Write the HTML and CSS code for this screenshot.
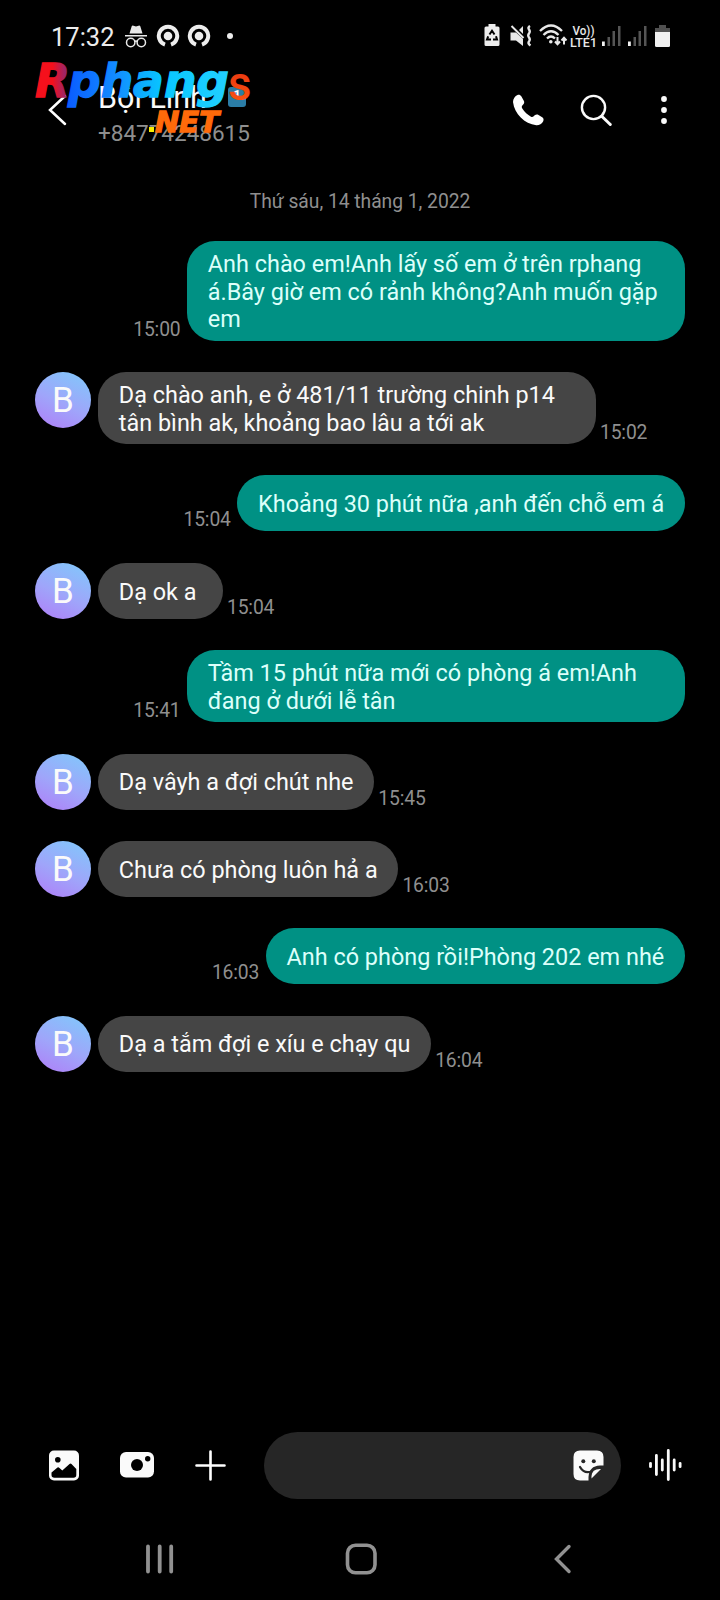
FILE: index.html
```html
<!DOCTYPE html>
<html lang="vi">
<head>
<meta charset="utf-8">
<title>Tin nhắn</title>
<link rel="stylesheet" href="styles.css">
</head>
<body>
<div class="screen">
  <div class="status">
    <span class="clock">17:32</span>
    <svg class="st-incog" width="24" height="24" viewBox="0 0 24 24" fill="#e8e8e8"><path d="M5.5 9.5 7.7 2.2Q8.300 1.200 9.500 1.700L12 2.500 14.500 1.700Q15.700 1.200 16.300 2.200L18.500 9.500ZM1 11H23V12.500H1Z"/><g fill="none" stroke="#e8e8e8" stroke-width="1.500"><circle cx="6.700" cy="18.500" r="4.200"/><circle cx="17.300" cy="18.500" r="4.200"/><path d="M10.700 17.500Q12 16.500 13.300 17.500"/></g></svg>
    <svg class="st-ring" width="24" height="24" viewBox="0 0 24 24"><path d="M9 20.600A9.200 9.200 0 1 1 15 20.600" fill="none" stroke="#ededed" stroke-width="4"/><circle cx="12" cy="12" r="4.300" fill="#ededed"/></svg>
    <svg class="st-ring2" width="24" height="24" viewBox="0 0 24 24"><path d="M9 20.600A9.200 9.200 0 1 1 15 20.600" fill="none" stroke="#ededed" stroke-width="4"/><circle cx="12" cy="12" r="4.300" fill="#ededed"/></svg>
    <span class="st-dot"></span>
    <div class="st-right">
      <svg width="16" height="23" viewBox="0 0 16 23"><path d="M4.500 0H11.500V2.500H14Q15.500 2.500 15.500 4V20.500Q15.500 22 14 22H2Q.5 22 .5 20.500V4Q.5 2.500 2 2.500H4.500Z" fill="#ececec"/><path d="M5.500 10.500 8 6.800 10.500 10.500M12 12.300 13 15.500H9M7 15.500H3L4.200 12.300" fill="none" stroke="#000" stroke-width="2"/></svg>
      <svg class="mute" width="23" height="22" viewBox="0 0 23 22"><path d="M.5 7.500H6L13 14V21L6 15.500H.5ZM9 5 13 1V9Z" fill="#e8e8e8"/><path d="M1.500 1 13.500 13" stroke="#e8e8e8" stroke-width="2"/><path d="M20 1Q17.500 2.500 19 4.500T19 8.500T19 12.500T19 16.500T20.500 20.500" fill="none" stroke="#e8e8e8" stroke-width="2.400"/></svg>
      <svg class="wifi" width="29" height="23" viewBox="0 0 29 23" fill="none" stroke="#e8e8e8" stroke-width="2.300"><path d="M1 7Q12 -4 23 7M4.500 11Q12 3.500 19.500 11M8 14.500Q12 10.500 16 14.500"/><circle cx="11.800" cy="17.700" r="1.800" fill="#e8e8e8" stroke="none"/><path d="M18.500 13V20M16 17.500 18.500 20.300 21 17.500M25 20.500V14M22.500 16.500 25 13.700 27.500 16.500" stroke-width="2"/></svg>
      <svg class="lte" width="28" height="24" viewBox="0 0 28 24"><text x="2.500" y="10.500" textLength="22" lengthAdjust="spacingAndGlyphs">Vo))</text><text x="0" y="22.500" textLength="27" lengthAdjust="spacingAndGlyphs">LTE1</text></svg>
      <svg class="sig1" width="19" height="21" viewBox="0 0 19 21" fill="#555"><path d="M5.500 12h2.500v9h-2.500zM10.500 6h2.500v15h-2.500zM16 1h2.500v20h-2.500z"/><path d="M0 16.500h2.800V21H0z" fill="#f2f2f2"/></svg>
      <svg class="sig2" width="19" height="21" viewBox="0 0 19 21" fill="#555"><path d="M5.500 12h2.500v9h-2.500zM10.500 6h2.500v15h-2.500zM16 1h2.500v20h-2.500z"/><path d="M0 16.500h2.800V21H0z" fill="#f2f2f2"/></svg>
      <svg class="batt" width="15" height="22" viewBox="0 0 15 22"><path d="M4 0H11V3H15V8H0V3H4Z" fill="#505050"/><path d="M0 7H15V20.500Q15 22 13.500 22H1.500Q0 22 0 20.500Z" fill="#f0f0f0"/></svg>
    </div>
  </div>

  <header class="header">
    <svg class="back" width="20" height="34" viewBox="0 0 20 34"><path d="M17 3 2 17 17 31" fill="none" stroke="#fff" stroke-width="2.500" stroke-linecap="round"/></svg>
    <div class="contact">
      <div class="name">Bội Linh</div>
      <div class="number">+84774248615</div>
      <span class="sim">1</span>
    </div>
    <svg class="call" width="33" height="33" viewBox="0 0 33 33"><path d="M1 8C1 5 3 2 5.500 1C7 .3 8.500 1 9.300 2.300L11.800 6.700C12.600 8 12.200 9.300 11.200 10.500L10.300 11.500C9.500 12.500 9.700 13.500 10.300 14.500C12.500 18 15.500 20.800 19 22.700C20 23.200 20.900 23 21.700 22.200L22.700 21.300C23.900 20.300 25.200 20.200 26.500 20.900L30.200 23.300C31.600 24.200 31.900 25.700 31.200 27.200C29.900 30 27 31.500 24.300 31.300C12.500 29.700 2.500 20 1 8Z" fill="#fff"/></svg>
    <svg class="search" width="33" height="33" viewBox="0 0 33 33" fill="none" stroke="#fafafa"><circle cx="13.500" cy="13.500" r="11.600" stroke-width="2.400"/><path d="M22 22.500 30.300 30.500" stroke-width="3" stroke-linecap="round"/></svg>
    <svg class="more" width="8" height="30" viewBox="0 0 8 30" fill="#fafafa"><circle cx="4" cy="4" r="2.900"/><circle cx="4" cy="15" r="2.900"/><circle cx="4" cy="26" r="2.900"/></svg>

    <svg class="watermark" width="226" height="84" viewBox="0 0 226 84">
      <defs>
        <linearGradient id="wr" x1="0" x2="1" y1="0" y2="0"><stop offset=".5" stop-color="#f5101c"/><stop offset="1" stop-color="#7b2d86"/></linearGradient>
        <linearGradient id="wb" x1="0" x2="1" y1="0" y2="0"><stop offset="0" stop-color="#0a5cff"/><stop offset=".3" stop-color="#128cff"/><stop offset=".6" stop-color="#08c8ff"/><stop offset="1" stop-color="#22d0ff"/></linearGradient>
        <linearGradient id="ws" x1="0" x2="0" y1="0" y2="1"><stop offset="0" stop-color="#e22c10"/><stop offset="1" stop-color="#ff5a12"/></linearGradient>
      </defs>
      <text class="wm-main" x="4" y="42.500" font-size="46" textLength="35" lengthAdjust="spacingAndGlyphs" fill="url(#wr)" stroke="url(#wr)">R</text>
      <text class="wm-main" x="37" y="42.500" font-size="46" textLength="161" lengthAdjust="spacingAndGlyphs" fill="url(#wb)" stroke="url(#wb)">phang</text>
      <text class="wm-s" x="197" y="46" font-size="49" textLength="23.500" lengthAdjust="spacingAndGlyphs" fill="url(#ws)">s</text>
      <path d="M118 73h5v5h-5z" fill="#f8f000"/>
      <text class="wm-main" x="124" y="77.500" font-size="29" textLength="64" lengthAdjust="spacingAndGlyphs" fill="#ff6a0a" stroke="#ff6a0a">NET</text>
    </svg>
  </header>

  <div class="date">Thứ sáu, 14 tháng 1, 2022</div>

  <main class="thread">
    <div class="row out"><div class="bubble wide">Anh chào em!Anh lấy số em ở trên rphang<br>á.Bây giờ em có rảnh không?Anh muốn gặp<br>em</div><time>15:00</time></div>
    <div class="row in"><div class="avatar">B</div><div class="bubble wide">Dạ chào anh, e ở 481/11 trường chinh p14<br>tân bình ak, khoảng bao lâu a tới ak</div><time>15:02</time></div>
    <div class="row out"><div class="bubble">Khoảng 30 phút nữa ,anh đến chỗ em á</div><time>15:04</time></div>
    <div class="row in"><div class="avatar">B</div><div class="bubble">Dạ ok a</div><time>15:04</time></div>
    <div class="row out"><div class="bubble wide">Tầm 15 phút nữa mới có phòng á em!Anh<br>đang ở dưới lễ tân</div><time>15:41</time></div>
    <div class="row in"><div class="avatar">B</div><div class="bubble">Dạ vâyh a đợi chút nhe</div><time>15:45</time></div>
    <div class="row in"><div class="avatar">B</div><div class="bubble">Chưa có phòng luôn hả a</div><time>16:03</time></div>
    <div class="row out"><div class="bubble">Anh có phòng rồi!Phòng 202 em nhé</div><time>16:03</time></div>
    <div class="row in"><div class="avatar">B</div><div class="bubble">Dạ a tắm đợi e xíu e chạy qu</div><time>16:04</time></div>
  </main>

  <footer class="composer">
    <svg class="gallery" width="30" height="31" viewBox="0 0 30 31"><rect y=".5" width="30" height="30" rx="5" fill="#fafafa"/><circle cx="8.800" cy="9.800" r="2.800"/><path d="M2.500 22.500 8.500 17.500Q9.500 17 10.500 18L13.300 20.500 20.500 14Q21.500 13.200 22.500 14L27.300 19V25Q27.300 27.700 24.500 27.700H5.500Q2.500 27.700 2.500 25Z"/></svg>
    <svg class="camera" width="34" height="26" viewBox="0 0 34 26"><rect width="34" height="25.500" rx="6" fill="#fafafa"/><circle cx="17" cy="13" r="6"/><circle cx="27.700" cy="6.700" r="2.700"/></svg>
    <svg class="plus" width="31" height="31" viewBox="0 0 31 31"><path d="M1.500 15.500H29.500M15.500 1.500V29.500" stroke="#fff" stroke-width="2.600" stroke-linecap="round"/></svg>
    <div class="field">
      <svg width="31" height="31" viewBox="0 0 31 31"><path d="M7 .5H24Q30.500 .5 30.500 7V15.500H27Q16 16 15.500 27V30.500H7Q.5 30.500 .5 24V7Q.5 .5 7 .5Z" fill="#fafafa"/><path d="M18.500 28.500V26Q19 18.500 28 19Z" fill="#fafafa"/><circle cx="10.300" cy="11.300" r="2" fill="#262626"/><circle cx="20.800" cy="11.300" r="2" fill="#262626"/><path d="M7 17Q11 24 18.500 21.500" fill="none" stroke="#262626" stroke-width="2.300" stroke-linecap="round"/></svg>
    </div>
    <svg class="voice" width="33" height="32" viewBox="0 0 33 32"><path d="M1.500 14.300V17.700M7.400 6.500V25.500M13.300 11V21M19.300 1.500V30.500M25.200 11V21M31.100 14.300V17.700" stroke="#fafafa" stroke-width="2.800" stroke-linecap="round"/></svg>
  </footer>

  <nav class="nav">
    <svg width="28" height="32" viewBox="0 0 28 32"><path d="M2 3.500V28.500M13.700 3.500V28.500M25.200 3.500V28.500" stroke="#919191" stroke-width="3.800" stroke-linecap="round"/></svg>
    <svg class="home" width="32" height="32" viewBox="0 0 32 32"><rect x="2.500" y="2.300" width="27.500" height="27.500" rx="8" fill="none" stroke="#919191" stroke-width="3.600"/></svg>
    <svg width="18" height="32" viewBox="0 0 18 32"><path d="M15 3.500 2.500 16 15 28.500" fill="none" stroke="#919191" stroke-width="3.400" stroke-linecap="round"/></svg>
  </nav>
</div>
</body>
</html>
```

FILE: styles.css
```css
* { box-sizing: border-box; }
body { margin: 0; background: #000; font-family: Roboto, "Noto Sans", sans-serif; color: #fafafa; }
svg { display: block; flex: none; }
.screen { width: 720px; height: 1600px; display: flex; flex-direction: column; overflow: hidden; background: #000; }

.status { height: 72px; display: flex; align-items: center; padding: 0 50px 0 51px; flex: none; }
.clock { font-size: 25.500px; line-height: 30px; width: 73px; color: #ececec; margin-top: 1px; }
.st-ring { margin-left: 8px; }
.st-ring2 { margin-left: 7px; }
.st-dot { width: 6px; height: 6px; border-radius: 50%; background: #ececec; margin-left: 16px; }
.st-right { margin-left: auto; display: flex; align-items: center; margin-top: -1px; }
.mute { margin-left: 10px; }
.wifi { margin-left: 6px; }
.lte { margin-left: 2px; fill: #e8e8e8; font-size: 12.500px; font-weight: 500; }
.sig1 { margin-left: 4px; }
.sig2 { margin-left: 7px; }
.batt { margin-left: 8px; }

.header { position: relative; height: 76px; display: flex; align-items: center; padding: 0 52px 0 48px; flex: none; }
.contact { position: relative; margin-left: 30px; flex: 1; }
.name { font-size: 30.500px; line-height: 36px; margin-top: 6px; }
.number { font-size: 22.500px; line-height: 26px; color: #8f8f8f; margin-top: 4px; }
.sim { position: absolute; left: 130px; top: 13px; width: 18px; height: 20px; border-radius: 3px; background: #2b7da6; color: #fff; font-size: 13px; font-weight: 700; line-height: 16px; text-align: center; }
.search { margin-left: 35px; }
.more { margin-left: 47px; }
.watermark { position: absolute; left: 31px; top: -18px; overflow: visible; }
.wm-main { font-family: "DejaVu Sans", sans-serif; font-weight: 700; font-style: italic; stroke-width: 1.300px; }
.wm-s { font-family: Roboto, sans-serif; font-weight: 500; }

.date { text-align: center; font-size: 19.300px; letter-spacing: -.03px; line-height: 24px; margin-top: 42px; color: #8f8f8f; flex: none; }

.thread { flex: 1; display: flex; flex-direction: column; gap: 31.350px; padding: 27.300px 35px 0; }
.row { display: flex; align-items: flex-end; }
.row.out { flex-direction: row-reverse; }
.bubble { min-height: 56px; min-width: 125px; padding: 10px 20.800px 7px; border-radius: 28px; font-size: 23.430px; line-height: 27.500px; white-space: nowrap; display: flex; align-items: center; }
.bubble.wide { width: 498px; }
.out .bubble { background: #009184; color: #dcfffa; }
.in .bubble { background: #454545; }
time { font-size: 19.300px; letter-spacing: -.15px; line-height: 22px; color: #8f8f8f; }
.out time { margin-right: 6.500px; }
.in time { margin-left: 4px; }
.avatar { width: 56px; height: 56px; border-radius: 50%; margin-right: 7px; align-self: flex-start; background: linear-gradient(205deg, #86c2fb 12%, #9fa5fa 55%, #ad84f8 92%); font-size: 35px; line-height: 57px; text-align: center; flex: none; }

.composer { height: 68px; display: flex; align-items: center; padding-left: 49px; flex: none; }
.camera { margin-left: 41px; }
.plus { margin-left: 41px; }
.field { width: 357px; height: 67px; border-radius: 34px; background: #262626; margin-left: 38px; display: flex; align-items: center; justify-content: flex-end; padding-right: 17px; }
.voice { margin-left: 28px; }

.nav { height: 101px; display: flex; justify-content: space-between; padding: 44px 148px 0 146px; flex: none; }
.home { margin-right: 7px; }
```
